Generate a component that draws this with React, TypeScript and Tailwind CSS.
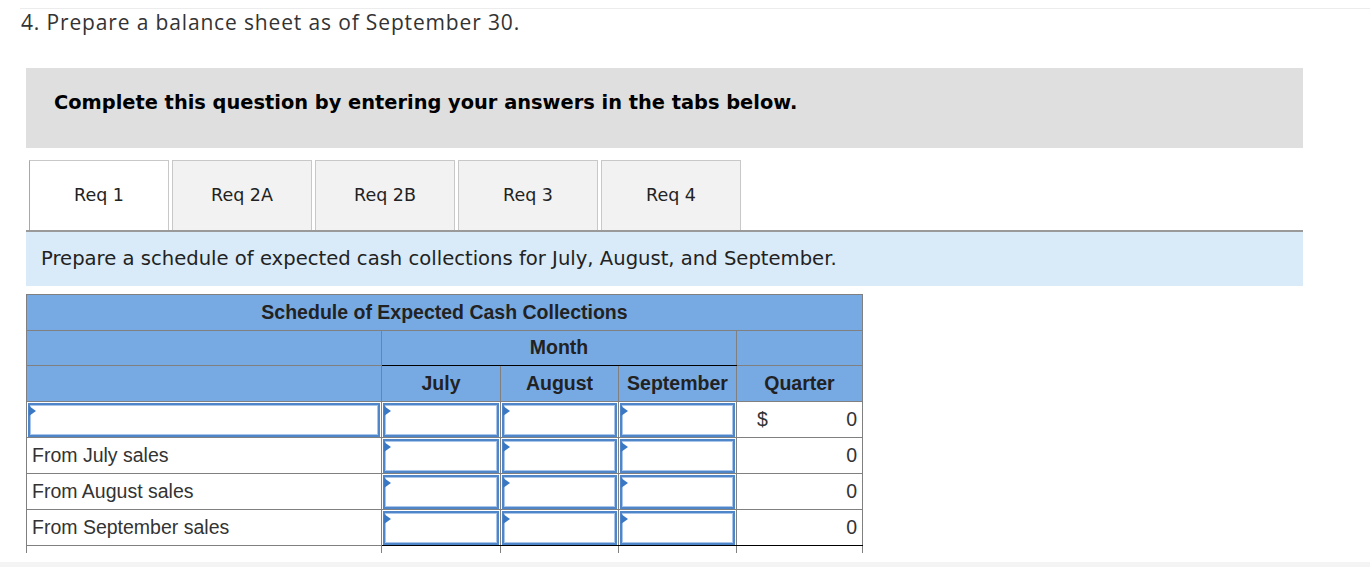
import React from 'react';

const tabs = ['Req 1', 'Req 2A', 'Req 2B', 'Req 3', 'Req 4'];

const rows = [
  { label: '', dollar: true },
  { label: 'From July sales', dollar: false },
  { label: 'From August sales', dollar: false },
  { label: 'From September sales', dollar: false },
];

const InputBox: React.FC = () => (
  <div className="relative h-[34px] border-2 border-[#4f86ca] bg-white shadow-[inset_0_0_0_1px_#a9c6ea]">
    <span className="absolute left-[-1px] top-[1px] w-0 h-0 border-y-[5px] border-y-transparent border-l-[7px] border-l-[#3b78c4]" />
  </div>
);

const App: React.FC = () => {
  return (
    <div className="w-[1370px] h-[567px] bg-white overflow-hidden relative">
      <div className="ml-5 mt-2 border-t border-[#ececec]">
        <h1 className="pl-[1px] pt-[1px] text-[21px] leading-[24px] tracking-[0.85px] text-[#333] font-['Open_Sans',sans-serif]">
          4. Prepare a balance sheet as of September 30.
        </h1>
      </div>

      <div className="ml-[26px] w-[1277px] mt-[34px]">
        <div className="h-[80px] bg-[#dfdfdf] flex items-center pl-[28px] pb-[10px]">
          <p className="text-[19.4px] font-bold text-black font-['DejaVu_Sans',Verdana,sans-serif]">
            Complete this question by entering your answers in the tabs below.
          </p>
        </div>

        <div className="mt-[12px] flex items-start gap-[3px] pl-[3px] border-b-2 border-[#9a9a9a]">
          {tabs.map((t, i) => (
            <div
              key={t}
              className={`w-[140px] h-[70px] flex items-center justify-center border border-b-0 border-[#c8c8c8] text-[17.5px] text-[#222] font-['DejaVu_Sans',Verdana,sans-serif] ${
                i === 0 ? 'bg-white border-l-[#a8a8a8]' : 'bg-[#f2f2f2]'
              }`}
            >
              {t}
            </div>
          ))}
        </div>

        <div className="h-[54px] bg-[#d9ebf9] flex items-center pl-[15px]">
          <p className="text-[19.6px] text-[#222] font-['DejaVu_Sans',Verdana,sans-serif]">
            Prepare a schedule of expected cash collections for July, August, and September.
          </p>
        </div>

        <table className="mt-[8px] border-collapse table-fixed w-[836px] font-['Liberation_Sans',Arial,sans-serif]">
          <colgroup>
            <col className="w-[355px]" />
            <col className="w-[119px]" />
            <col className="w-[118px]" />
            <col className="w-[118px]" />
            <col className="w-[126px]" />
          </colgroup>
          <thead>
            <tr className="h-[36px] bg-[#77aae3]">
              <th colSpan={5} className="border border-[#808080] text-[19.5px] font-bold text-[#222] text-center">
                Schedule of Expected Cash Collections
              </th>
            </tr>
            <tr className="h-[35px] bg-[#77aae3]">
              <th className="border border-[#808080]" />
              <th colSpan={3} className="border border-[#808080] border-b-black text-[19.5px] font-bold text-[#222]">
                Month
              </th>
              <th className="border border-[#808080]" />
            </tr>
            <tr className="h-[36px] bg-[#77aae3]">
              <th className="border border-[#808080]" />
              <th className="border border-[#808080] text-[19.5px] font-bold text-[#222]">July</th>
              <th className="border border-[#808080] text-[19.5px] font-bold text-[#222]">August</th>
              <th className="border border-[#808080] text-[19.5px] font-bold text-[#222]">September</th>
              <th className="border border-[#808080] text-[19.5px] font-bold text-[#222]">Quarter</th>
            </tr>
          </thead>
          <tbody>
            {rows.map((r, i) => (
              <tr key={i} className="h-[36px]">
                <td className="border border-[#808080] p-0 px-[1px] text-[19.5px] text-[#333]">
                  {r.label ? <span className="pl-[4px]">{r.label}</span> : <InputBox />}
                </td>
                <td className={`border border-[#808080] p-0 px-[1px] ${i === 3 ? 'border-b-black' : ''}`}>
                  <InputBox />
                </td>
                <td className={`border border-[#808080] p-0 px-[1px] ${i === 3 ? 'border-b-black' : ''}`}>
                  <InputBox />
                </td>
                <td className={`border border-[#808080] p-0 px-[1px] ${i === 3 ? 'border-b-black' : ''}`}>
                  <InputBox />
                </td>
                <td className={`border border-[#808080] pl-[20px] pr-[5px] text-[19.5px] text-[#333] ${i === 3 ? 'border-b-black' : ''}`}>
                  <div className="flex justify-between">
                    <span>{r.dollar ? '$' : ''}</span>
                    <span>0</span>
                  </div>
                </td>
              </tr>
            ))}
            <tr className="h-[7px]">
              <td className="border-x border-[#808080]" />
              <td className="border-x border-[#808080]" />
              <td className="border-x border-[#808080]" />
              <td className="border-x border-[#808080]" />
              <td className="border-x border-[#808080]" />
            </tr>
          </tbody>
        </table>
      </div>
      <div className="absolute left-0 right-0 top-[562px] h-[5px] bg-[#f4f4f4]" />
    </div>
  );
};

export default App;
